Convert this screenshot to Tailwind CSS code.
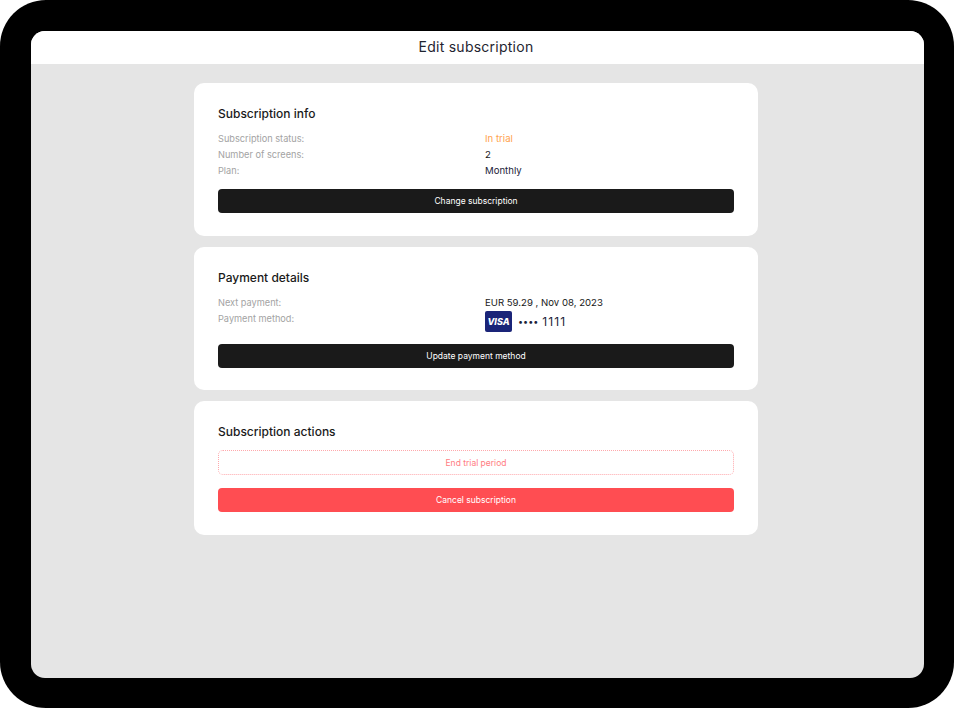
<!DOCTYPE html>
<html lang="en">
<head>
    <meta charset="UTF-8">
    <title>Edit subscription</title>
    <script src="https://cdn.jsdelivr.net/npm/@tailwindcss/browser@4"></script>
</head>
<body class="bg-white font-['Inter',sans-serif] overflow-hidden">
    <!-- Device frame -->
    <div class="w-[954px] h-[708px] bg-black rounded-[46px] p-[31px] pb-[30px] pr-[30px]">
        <div class="w-[893px] h-[647px] bg-[#e5e5e5] rounded-[14px] overflow-hidden flex flex-col">
            <div class="h-[33px] shrink-0 bg-white flex items-center justify-center pb-[3px] pr-[3px] text-[14px] tracking-[0.25px] text-[#1f2430]">Edit subscription</div>

            <div class="w-[563.5px] ml-[163px] mt-[19px] flex flex-col gap-[11px]">
                <!-- Subscription info -->
                <section class="h-[153px] bg-white rounded-[10px] pl-6 pr-[23.5px] pt-[23px]">
                    <h2 class="text-[12px] leading-[16px] font-medium text-[#1a1a1a]">Subscription info</h2>
                    <div class="mt-[9px] text-[9.6px] leading-[16px]">
                        <div class="flex"><span class="w-[267px] text-[9.2px] text-[#a3a3a3]">Subscription status:</span><span class="text-[#ffa24d]">In trial</span></div>
                        <div class="flex"><span class="w-[267px] text-[9.2px] text-[#a3a3a3]">Number of screens:</span><span class="text-[#1a1a1a]">2</span></div>
                        <div class="flex"><span class="w-[267px] text-[9.2px] text-[#a3a3a3]">Plan:</span><span class="text-[#1a2238]">Monthly</span></div>
                    </div>
                    <button class="mt-[10px] w-full h-6 bg-[#1a1a1a] rounded-[4px] text-white text-[8.5px]">Change subscription</button>
                </section>

                <!-- Payment details -->
                <section class="h-[143px] bg-white rounded-[10px] pl-6 pr-[23.5px] pt-[23px]">
                    <h2 class="text-[12px] leading-[16px] font-medium text-[#1a1a1a]">Payment details</h2>
                    <div class="mt-[9px] text-[9.6px] leading-[16px]">
                        <div class="flex"><span class="w-[267px] text-[9.2px] text-[#a3a3a3]">Next payment:</span><span class="text-[#1a1a1a]">EUR 59.29 , Nov 08, 2023</span></div>
                        <div class="flex">
                            <span class="w-[267px] text-[9.2px] text-[#a3a3a3]">Payment method:</span>
                            <span class="flex items-center text-[#1a2238]">
                                <span class="w-[27px] h-[21px] rounded-[2px] bg-[#1a2478] text-white text-[9px] font-extrabold italic flex items-center justify-center">VISA</span>
                                <span class="ml-[6px] text-[9px]">••••</span>
                                <span class="ml-1 text-[12px] tracking-[1.1px]">1111</span>
                            </span>
                        </div>
                    </div>
                    <button class="mt-3 w-full h-6 bg-[#1a1a1a] rounded-[4px] text-white text-[8.5px]">Update payment method</button>
                </section>

                <!-- Subscription actions -->
                <section class="h-[134px] bg-white rounded-[10px] pl-6 pr-[23.5px] pt-[23px]">
                    <h2 class="text-[12px] leading-[16px] font-medium text-[#1a1a1a]">Subscription actions</h2>
                    <button class="mt-[10px] w-full h-[25px] pt-[1px] bg-white border border-dotted border-[#ffa8ac] rounded-[5px] text-[#ff7d82] text-[8.5px]">End trial period</button>
                    <button class="mt-[13px] w-full h-6 bg-[#ff4d52] rounded-[4px] text-white text-[8.5px]">Cancel subscription</button>
                </section>
            </div>
        </div>
    </div>
</body>
</html>
